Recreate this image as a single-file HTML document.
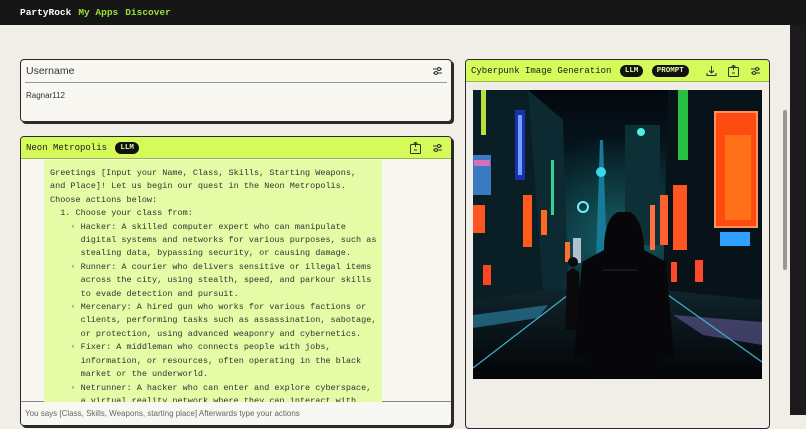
<!DOCTYPE html>
<html><head><meta charset="utf-8"><style>
*{box-sizing:border-box;margin:0;padding:0}
body{width:806px;height:415px;overflow:hidden;background:#f0eee6;font-family:"Liberation Mono",monospace;position:relative}
.top{position:absolute;left:0;top:0;width:806px;height:25px;background:#161616;font-size:9.5px;font-weight:bold;line-height:26px;padding-left:20px}
.top span{margin-right:7px}
.side{position:absolute;left:790px;top:25px;width:16px;height:390px;background:#1c1a1c}
.thumb{position:absolute;left:783px;top:110px;width:4px;height:160px;background:#9a9892;border-radius:2px}
.card{position:absolute;border:1.5px solid #2a2a2a;border-radius:4px;box-shadow:2px 2px 0 #2a2a2a;background:#f8f7f2;overflow:hidden}
.hdr{height:22px;background:#d4fb5a;border-bottom:1px solid #9bb640;font-size:9px;line-height:22px;padding-left:5px;color:#1a1a1a;position:relative}
.pill{display:inline-block;background:#111;color:#e0f6a0;font-size:7.5px;font-weight:bold;border-radius:7px;padding:0 5px;line-height:12px;vertical-align:1px;margin-left:3px}
.ic{position:absolute;top:5px}
.txt{position:absolute;left:44px;top:160px;width:338px;height:242px;background:#e6fba6;font-size:8.5px;line-height:13.4px;color:#333;padding:7px 0 0 6px;white-space:pre;overflow:hidden}
</style></head><body>
<div class="top"><span style="color:#fff">PartyRock</span><span style="color:#9be03c">My Apps</span><span style="color:#9be03c">Discover</span></div>
<div class="side"></div><div class="thumb"></div>

<div class="card" style="left:20px;top:59px;width:432px;height:63px">
 <div style="font-family:'Liberation Sans',sans-serif;font-size:10.5px;color:#333;padding:5px 0 0 1px;height:23px;border-bottom:1px solid #999;margin:0 4px">Username</div>
 <div style="font-family:'Liberation Sans',sans-serif;font-size:8px;color:#333;padding:8px 0 0 5px">Ragnar112</div>
 <svg class="ic" style="left:411px;top:6px" width="11" height="10" viewBox="0 0 11 10" fill="none" stroke="#333" stroke-width="1"><path d="M1 3h9M1 7h9"/><circle cx="7" cy="3" r="1.5" fill="#f8f7f2"/><circle cx="4" cy="7" r="1.5" fill="#f8f7f2"/></svg>
</div>

<div class="card" style="left:20px;top:136px;width:432px;height:290px">
 <div class="hdr">Neon Metropolis <span class="pill">LLM</span>
  <svg class="ic" style="left:389px" width="11" height="12" viewBox="0 0 11 12" fill="none" stroke="#333" stroke-width="1"><rect x="0.5" y="2.5" width="10" height="9" rx="1"/><path d="M5.5 0v5M3.5 2l2-2 2 2M4 8h3"/></svg>
  <svg class="ic" style="left:411px;top:6px" width="11" height="10" viewBox="0 0 11 10" fill="none" stroke="#333" stroke-width="1"><path d="M1 3h9M1 7h9"/><circle cx="7" cy="3" r="1.5" fill="#d4fb5a"/><circle cx="4" cy="7" r="1.5" fill="#d4fb5a"/></svg>
 </div>
 <div style="position:absolute;left:0;top:264px;width:432px;height:30px;border-top:1px solid #888;background:#f8f7f2;font-family:'Liberation Sans',sans-serif;font-size:8px;color:#666;padding:7px 0 0 4px">You says [Class, Skills, Weapons, starting place] Afterwards type your actions</div>
</div>
<div class="txt">Greetings [Input your Name, Class, Skills, Starting Weapons,
and Place]! Let us begin our quest in the Neon Metropolis.
Choose actions below:
  1. Choose your class from:
    ◦ Hacker: A skilled computer expert who can manipulate
      digital systems and networks for various purposes, such as
      stealing data, bypassing security, or causing damage.
    ◦ Runner: A courier who delivers sensitive or illegal items
      across the city, using stealth, speed, and parkour skills
      to evade detection and pursuit.
    ◦ Mercenary: A hired gun who works for various factions or
      clients, performing tasks such as assassination, sabotage,
      or protection, using advanced weaponry and cybernetics.
    ◦ Fixer: A middleman who connects people with jobs,
      information, or resources, often operating in the black
      market or the underworld.
    ◦ Netrunner: A hacker who can enter and explore cyberspace,
      a virtual reality network where they can interact with</div>

<div class="card" style="left:465px;top:59px;width:305px;height:370px;background:#f0eee6;box-shadow:none">
 <div class="hdr">Cyberpunk Image Generation <span class="pill">LLM</span> <span class="pill">PROMPT</span>
  <svg class="ic" style="left:240px" width="11" height="12" viewBox="0 0 11 12" fill="none" stroke="#333" stroke-width="1"><path d="M5.5 1v7M3 5.5l2.5 2.5 2.5-2.5M1 8v2.5h9V8"/></svg>
  <svg class="ic" style="left:262px" width="11" height="12" viewBox="0 0 11 12" fill="none" stroke="#333" stroke-width="1"><rect x="0.5" y="2.5" width="10" height="9" rx="1"/><path d="M5.5 0v5M3.5 2l2-2 2 2M4 8h3"/></svg>
  <svg class="ic" style="left:284px;top:6px" width="11" height="10" viewBox="0 0 11 10" fill="none" stroke="#333" stroke-width="1"><path d="M1 3h9M1 7h9"/><circle cx="7" cy="3" r="1.5" fill="#d4fb5a"/><circle cx="4" cy="7" r="1.5" fill="#d4fb5a"/></svg>
 </div>
</div>

<svg style="position:absolute;left:473px;top:90px" width="289" height="289" viewBox="0 0 289 289">
 <defs>
  <linearGradient id="sky" x1="0" y1="0" x2="0" y2="1"><stop offset="0" stop-color="#03080e"/><stop offset=".55" stop-color="#0a2a33"/><stop offset="1" stop-color="#04060a"/></linearGradient>
  <linearGradient id="road" x1="0" y1="0" x2="0" y2="1"><stop offset="0" stop-color="#10242c"/><stop offset="1" stop-color="#030406"/></linearGradient>
  <radialGradient id="glow" cx=".5" cy=".5" r=".35"><stop offset="0" stop-color="#2bbcc0" stop-opacity=".35"/><stop offset="1" stop-color="#2bbcc0" stop-opacity="0"/></radialGradient>
 </defs>
 <rect width="289" height="289" fill="url(#sky)"/>
 <rect width="289" height="289" fill="url(#glow)"/>
 <rect x="0" y="200" width="289" height="89" fill="url(#road)"/>
 <polygon points="0,0 55,0 70,200 0,210" fill="#0a1e26"/>
 <polygon points="55,0 90,30 95,190 70,200" fill="#0d2a33"/>
 <polygon points="195,0 289,0 289,210 190,200" fill="#081219"/>
 <rect x="0" y="65" width="18" height="40" fill="#3a7ac0"/><rect x="1" y="70" width="16" height="6" fill="#d070c0"/>
 <rect x="42" y="20" width="10" height="70" fill="#1a30b0"/><rect x="45" y="25" width="4" height="60" fill="#6fa0ff"/>
 <rect x="8" y="0" width="5" height="45" fill="#b8e040"/>
 <rect x="0" y="115" width="12" height="28" fill="#ff5522"/>
 <rect x="50" y="105" width="9" height="52" fill="#ff5a1a"/>
 <rect x="68" y="120" width="6" height="25" fill="#ff6a20"/>
 <rect x="78" y="70" width="3" height="55" fill="#3ad090"/>
 <rect x="10" y="175" width="8" height="20" fill="#ff4422"/>
 <rect x="92" y="152" width="5" height="20" fill="#ff7030"/>
 <rect x="100" y="148" width="8" height="25" fill="#b0c0d0"/>
 <polygon points="127,50 130,50 134,170 123,170" fill="#167a98"/><circle cx="128" cy="82" r="5" fill="#38d8e8"/>
 <circle cx="110" cy="117" r="5" fill="none" stroke="#6ff0ff" stroke-width="2"/>
 <rect x="152" y="35" width="35" height="120" fill="#0c3036"/><circle cx="168" cy="42" r="4" fill="#50f0e0"/>
 <rect x="205" y="0" width="10" height="70" fill="#28c040"/>
 <rect x="242" y="22" width="42" height="115" fill="#ff4a10" stroke="#ff9060" stroke-width="2"/>
 <rect x="252" y="45" width="26" height="85" fill="#ff8a20" opacity=".6"/>
 <rect x="247" y="142" width="30" height="14" fill="#2fa0ff"/>
 <rect x="200" y="95" width="14" height="65" fill="#ff5520"/><rect x="187" y="105" width="8" height="50" fill="#ff6030"/>
 <rect x="177" y="115" width="5" height="45" fill="#ff7040"/>
 <rect x="222" y="170" width="8" height="22" fill="#ff4a2a"/><rect x="198" y="172" width="6" height="20" fill="#ff4a2a"/>
 <polygon points="0,225 75,215 65,228 0,238" fill="#3ab0e0" opacity=".45"/>
 <polygon points="200,225 289,232 289,255 230,245" fill="#8070c0" opacity=".45"/>
 <path d="M0 278L95 205M289 272L195 205" stroke="#40b0d0" stroke-width="1.2"/>
 <path d="M92 240l2-58 6-4 6 4 2 58z" fill="#0a0a0c"/><circle cx="100" cy="172" r="5" fill="#0a0a0c"/>
 <path d="M145 122c-10 4-14 20-14 38l-22 12-8 95 12 0 4 22h70l2-22 12 0-8-95-22-12c0-20-6-34-14-38z" fill="#070709"/>
 <path d="M130 180l34 0" stroke="#2a2a2a" stroke-width="1"/>
</svg>
</body></html>
